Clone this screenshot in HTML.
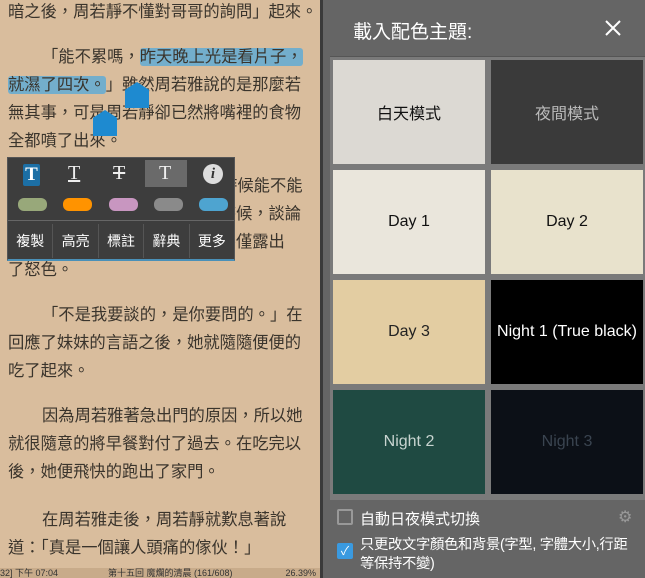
<!DOCTYPE html><html><head><meta charset="utf-8"><style>
*{margin:0;padding:0;box-sizing:border-box}
body{width:645px;height:578px;overflow:hidden;position:relative;background:#3a3a3a;font-family:"Liberation Sans","Noto Sans CJK TC",sans-serif}
#L{position:absolute;left:0;top:0;width:320px;height:578px;background:#d9bd9d;overflow:hidden}
.t{position:absolute;left:8px;font-size:16.3px;letter-spacing:0px;color:#3a342c;white-space:nowrap;line-height:20px}
.i{padding-left:34px}
.hl{background:rgba(80,170,220,.75);border-radius:3px}
#sb{position:absolute;left:0;top:568px;width:320px;height:10px;background:#c8ab8a;font-size:9px;color:#333;line-height:10px}
#menu{position:absolute;left:7px;top:157px;width:228px;height:104px;background:#3d3d3d;border:1px solid #555;border-bottom:2px solid #4a90b8}
#D{position:absolute;left:323px;top:0;width:322px;height:578px;background:#656565}
#hd{position:absolute;left:0;top:0;width:322px;height:56px;color:#fff;font-size:19px}
.tile{position:absolute;width:152px;height:104px;display:flex;align-items:center;justify-content:center;font-size:16px}
#grid{position:absolute;left:7px;top:56px;width:315px;height:444px;background:#7a7a7a;border-top:1px solid #555}
</style></head><body>
<div id="L">
<div class="t" style="top:2px">暗之後，周若靜不懂對哥哥的詢問」起來。</div>
<div class="t i" style="top:47px">「能不累嗎，<span class="hl">昨天晚上光是看片子，</span></div>
<div class="t" style="top:75px"><span class="hl">就濕了四次。</span>」雖然周若雅說的是那麼若</div>
<div class="t" style="top:103px">無其事，可是周若靜卻已然將嘴裡的食物</div>
<div class="t" style="top:131px">全都噴了出來。</div>
<div class="t i" style="top:176px">「你這個傢伙，在說話的時候能不能</div>
<div class="t" style="top:204px">注意場合啊。聊看人在吃飯的時候，談論</div>
<div class="t" style="top:232px">這種事情周若雅，在她以人，不僅露出</div>
<div class="t" style="top:260px">了怒色。</div>
<div class="t i" style="top:305px">「不是我要談的，是你要問的。」在</div>
<div class="t" style="top:333px">回應了妹妹的言語之後，她就隨隨便便的</div>
<div class="t" style="top:361px">吃了起來。</div>
<div class="t i" style="top:406px">因為周若雅著急出門的原因，所以她</div>
<div class="t" style="top:434px">就很隨意的將早餐對付了過去。在吃完以</div>
<div class="t" style="top:462px">後，她便飛快的跑出了家門。</div>
<div class="t i" style="top:510px">在周若雅走後，周若靜就歎息著說</div>
<div class="t" style="top:538px">道：「真是一個讓人頭痛的傢伙！」</div>
<div style="position:absolute;left:125px;top:82px;width:24px;height:26px;background:#1e8ad0;clip-path:polygon(50% 0,100% 30%,100% 100%,0 100%,0 30%)"></div>
<div style="position:absolute;left:93px;top:110px;width:24px;height:26px;background:#1e8ad0;clip-path:polygon(50% 0,100% 30%,100% 100%,0 100%,0 30%)"></div>
<div id="menu">
<div style="position:absolute;left:15px;top:6px;width:17px;height:22px;background:#1c6fa5;border-radius:2px;color:#fff;font:bold 19px 'Liberation Serif',serif;text-align:center;line-height:22px">T</div>
<div style="position:absolute;left:60px;top:4px;color:#eee;font:20px 'Liberation Serif',serif;text-decoration:underline">T</div>
<div style="position:absolute;left:105px;top:4px;color:#eee;font:20px 'Liberation Serif',serif;text-decoration:line-through">T</div>
<div style="position:absolute;left:137px;top:2px;width:42px;height:27px;background:#6a6a6a"></div>
<div style="position:absolute;left:151px;top:4px;color:#eee;font:20px 'Liberation Serif',serif">T</div>
<div style="position:absolute;left:195px;top:6px;width:20px;height:20px;border-radius:50%;background:#ddd;color:#333;font:italic bold 15px 'Liberation Serif',serif;text-align:center;line-height:20px">i</div>
<div style="position:absolute;left:10px;top:40px;width:29px;height:13px;border-radius:6px;background:#98a87a"></div>
<div style="position:absolute;left:55px;top:40px;width:29px;height:13px;border-radius:6px;background:#ff9300"></div>
<div style="position:absolute;left:101px;top:40px;width:29px;height:13px;border-radius:6px;background:#c896c0"></div>
<div style="position:absolute;left:146px;top:40px;width:29px;height:13px;border-radius:6px;background:#8a8a8a"></div>
<div style="position:absolute;left:191px;top:40px;width:29px;height:13px;border-radius:6px;background:#4ea4d0"></div>
<div style="position:absolute;left:0;top:62px;width:226px;height:1px;background:#666"></div>
<div style="position:absolute;left:0;top:66px;width:226px;display:flex;color:#fff;font-size:14px;line-height:34px;text-align:center">
<div style="flex:1;border-right:1px solid #555">複製</div><div style="flex:1;border-right:1px solid #555">高亮</div><div style="flex:1;border-right:1px solid #555">標註</div><div style="flex:1;border-right:1px solid #555">辭典</div><div style="flex:1">更多</div></div>
</div>
<div id="sb"><span style="position:absolute;left:0">32] 下午 07:04</span><span style="position:absolute;left:108px">第十五回 魔爛的清晨 (161/608)</span><span style="position:absolute;right:4px">26.39%</span></div>
</div>
<div id="D">
<div id="hd"><span style="position:absolute;left:30px;top:17px">載入配色主題:</span>
<svg style="position:absolute;left:282px;top:20px" width="16" height="16"><path d="M1 1L15 15M15 1L1 15" stroke="#fff" stroke-width="2"/></svg></div>
<div id="grid"></div>
<div class="tile" style="left:10px;top:60px;background:#dcd9d3;color:#111">白天模式</div>
<div class="tile" style="left:168px;top:60px;background:#3a3a3a;color:#bbb">夜間模式</div>
<div class="tile" style="left:10px;top:170px;background:#eae6dc;color:#111">Day 1</div>
<div class="tile" style="left:168px;top:170px;background:#e8e2cc;color:#111">Day 2</div>
<div class="tile" style="left:10px;top:280px;background:#e3cda2;color:#222">Day 3</div>
<div class="tile" style="left:168px;top:280px;background:#000;color:#fff">Night 1 (True black)</div>
<div class="tile" style="left:10px;top:390px;background:#1f4a42;color:#c8d4d0">Night 2</div>
<div class="tile" style="left:168px;top:390px;background:#0c1017;color:#3a4450">Night 3</div>
<div style="position:absolute;left:14px;top:509px;width:16px;height:16px;border:2px solid #999;border-radius:2px"></div>
<div style="position:absolute;left:37px;top:508px;color:#fff;font-size:15px">自動日夜模式切換</div>
<div style="position:absolute;left:295px;top:507px;color:#999;font-size:16px">⚙</div>
<div style="position:absolute;left:14px;top:543px;width:16px;height:16px;background:#3a9ae0;border-radius:2px;color:#fff;font-size:12px;text-align:center;line-height:16px">✓</div>
<div style="position:absolute;left:37px;top:536px;width:272px;color:#fff;font-size:14.3px;line-height:19px;letter-spacing:-0.3px">只更改文字顏色和背景(字型, 字體大小,行距等保持不變)</div>
</div>
</body></html>
